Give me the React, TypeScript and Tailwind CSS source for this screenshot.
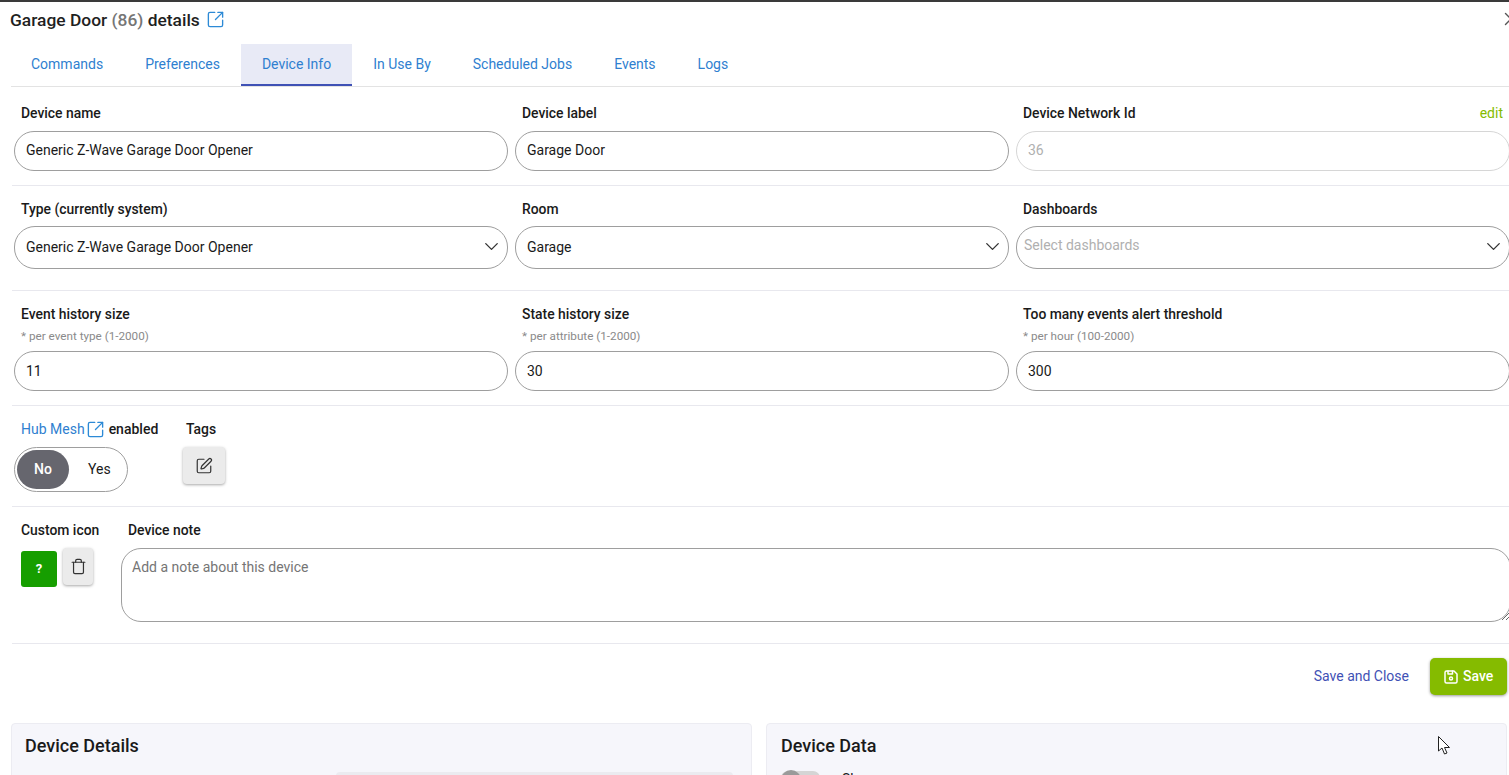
import React from 'react';
import { ChevronDown, SquareArrowOutUpRight, SquarePen, Trash, X } from 'lucide-react';
import { TbDeviceFloppy } from 'react-icons/tb';

const tabs = ['Commands', 'Preferences', 'Device Info', 'In Use By', 'Scheduled Jobs', 'Events', 'Logs'];

const Label = ({ children }: { children: React.ReactNode }) => (
  <div className="text-[13.9px] font-medium leading-5 text-[#1a1a1a]">{children}</div>
);

const SelectBox = ({ value, placeholder }: { value?: string; placeholder?: string }) => (
  <div className="flex h-[43px] items-center justify-between rounded-[21px] border border-[#9e9e9e] bg-white pr-[4px]">
    {value ? (
      <span className="pl-[11px] text-[14px] text-[#1a1a1a]">{value}</span>
    ) : (
      <span className="pb-[4px] pl-[7px] text-[14px] text-[#b0b0b0]">{placeholder}</span>
    )}
    <ChevronDown size={23} strokeWidth={1.4} className="mb-[2px] text-[#333]" />
  </div>
);

const Divider = () => <div className="ml-[1px] h-px bg-[#e8e8ee]" />;

export default function App() {
  return (
    <div className="h-[775px] w-[1509px] overflow-hidden bg-white font-['Roboto',sans-serif]">
      <div className="h-[2px] bg-[#3a3a3a]" />
      <div className="relative flex h-[42px] items-start pl-[10px] pt-[7px]">
        <span className="text-[17.4px] font-medium leading-[22px] text-[#1f1f1f]">
          Garage Door <span className="text-[#757575]">(86)</span> details
        </span>
        <SquareArrowOutUpRight size={19} strokeWidth={1.7} className="ml-[6px] mt-[1px] text-[#2d8ad6]" />
        <X size={22} strokeWidth={1.5} className="absolute right-[-13px] top-[6px] text-[#555]" />
      </div>

      <div className="ml-[11px] flex h-[43px] border-b border-[#e3e3e3]">
        {tabs.map((tab, i) => (
          <div
            key={tab}
            className={`flex items-center border-b-2 pr-[21px] pt-[1px] text-[14px] text-[#2f7fd0] ${
              i === 0 ? 'pl-[20px]' : 'pl-[21px]'
            } ${tab === 'Device Info' ? 'border-[#3f51b5] bg-[#e8eaf6]' : 'border-transparent'}`}
          >
            {tab}
          </div>
        ))}
      </div>

      <div className="ml-[11px] w-[1520px]">
        <div className="grid h-[98px] w-[1499px] grid-cols-3 gap-x-[7px] pl-[3px] pt-[16px]">
          <div>
            <div className="pl-[7px]"><Label>Device name</Label></div>
            <div className="mt-[8px] flex h-10 items-center rounded-[20px] border border-[#9e9e9e] px-[11px] pb-[2px] text-[14px] text-[#1a1a1a]">Generic Z-Wave Garage Door Opener</div>
          </div>
          <div>
            <div className="pl-[7px]"><Label>Device label</Label></div>
            <div className="mt-[8px] flex h-10 items-center rounded-[20px] border border-[#9e9e9e] px-[11px] pb-[2px] text-[14px] text-[#1a1a1a]">Garage Door</div>
          </div>
          <div>
            <div className="flex justify-between pl-[7px] pr-[7px]">
              <Label>Device Network Id</Label>
              <span className="text-[14px] leading-5 text-[#85bb00]">edit</span>
            </div>
            <div className="mt-[8px] flex h-10 items-center rounded-[20px] border border-[#d6d6d6] px-[11px] pb-[2px] text-[14px] text-[#b0b0b0]">36</div>
          </div>
        </div>
        <Divider />

        <div className="grid h-[104px] w-[1499px] grid-cols-3 gap-x-[7px] pl-[3px] pt-[13px]">
          <div>
            <div className="pl-[7px]"><Label>Type (currently system)</Label></div>
            <div className="mt-[7px]"><SelectBox value="Generic Z-Wave Garage Door Opener" /></div>
          </div>
          <div>
            <div className="pl-[7px]"><Label>Room</Label></div>
            <div className="mt-[7px]"><SelectBox value="Garage" /></div>
          </div>
          <div>
            <div className="pl-[7px]"><Label>Dashboards</Label></div>
            <div className="mt-[7px]"><SelectBox placeholder="Select dashboards" /></div>
          </div>
        </div>
        <Divider />

        <div className="grid h-[114px] w-[1499px] grid-cols-3 gap-x-[7px] pl-[3px] pt-[13px]">
          {[
            ['Event history size', '* per event type (1-2000)', '11'],
            ['State history size', '* per attribute (1-2000)', '30'],
            ['Too many events alert threshold', '* per hour (100-2000)', '300'],
          ].map(([label, hint, value]) => (
            <div key={label}>
              <div className="pl-[7px]"><Label>{label}</Label></div>
              <div className="mt-[4px] pl-[7px] text-[11.7px] leading-[16px] text-[#8a8a8a]">{hint}</div>
              <div className="mt-[7px] flex h-10 items-center rounded-[20px] border border-[#9e9e9e] px-[11px] text-[14px] text-[#1a1a1a]">{value}</div>
            </div>
          ))}
        </div>
        <Divider />

        <div className="flex h-[100px] pl-[3px] pt-[13px]">
          <div className="w-[169px]">
            <div className="flex items-center pl-[7px] text-[14px] leading-5">
              <span className="text-[#2f7fd0]">Hub Mesh</span>
              <SquareArrowOutUpRight size={19} strokeWidth={1.7} className="ml-[1px] text-[#2d8ad6]" />
              <span className="ml-[4px] font-medium text-[#1a1a1a]">enabled</span>
            </div>
            <div className="mt-[8px] flex h-[45px] w-[114px] items-center rounded-[23px] border border-[#9e9e9e] pl-[2px]">
              <div className="flex h-[39px] w-[52px] items-center justify-center rounded-[20px] bg-[#66666e] text-[14px] font-medium text-white">No</div>
              <div className="ml-[19px] text-[14px] text-[#1a1a1a]">Yes</div>
            </div>
          </div>
          <div>
            <div className="pl-[3px]"><Label>Tags</Label></div>
            <div className="mt-[8px] flex h-[37px] w-[42px] items-center justify-center rounded-[4px] bg-[#ebebeb] shadow-[0_1px_3px_rgba(0,0,0,0.35)]">
              <SquarePen size={18} strokeWidth={1.6} className="text-[#333]" />
            </div>
          </div>
        </div>
        <Divider />

        <div className="flex h-[136px] pl-[3px] pt-[13px]">
          <div className="w-[107px]">
            <div className="pl-[7px]"><Label>Custom icon</Label></div>
            <div className="mt-[8px] flex items-start pl-[7px]">
              <div className="mt-[3px] flex h-9 w-9 items-center justify-center rounded-[3px] bg-[#169e00] text-[13px] font-bold text-white">?</div>
              <div className="ml-[6px] flex h-[37px] w-[30px] items-center justify-center rounded-[4px] bg-[#ebebeb] shadow-[0_1px_3px_rgba(0,0,0,0.35)]">
                <Trash size={17} strokeWidth={1.7} className="text-[#333]" />
              </div>
            </div>
          </div>
          <div className="w-[1390px]">
            <div className="pl-[7px]"><Label>Device note</Label></div>
            <textarea
              readOnly
              placeholder="Add a note about this device"
              className="mt-[8px] block h-[74px] w-full resize-y rounded-[20px] border border-[#9e9e9e] px-[10px] py-[8px] text-[14px] leading-5 outline-none placeholder:text-[#757575]"
            />
          </div>
        </div>
        <Divider />
      </div>

      <div className="flex h-[79px] items-start justify-end pr-[2px] pt-[14px]">
        <span className="mr-[21px] mt-[8px] text-[14px] leading-5 text-[#3f51b5]">Save and Close</span>
        <div className="flex h-[37px] w-[77px] items-center gap-[3px] rounded-[5px] bg-[#85bb00] pl-[12px] text-[14px] font-medium text-white shadow-[0_1px_3px_rgba(0,0,0,0.4)]">
          <TbDeviceFloppy size={18} />
          Save
        </div>
      </div>

      <div className="flex gap-[14px] pl-[11px] pr-[2px]">
        <div className="h-[80px] w-[741px] rounded-[4px] border border-[#ececf2] bg-[#f6f6fb] pl-[13px] pr-[18px] pt-[10px]">
          <div className="text-[18px] font-medium leading-6 text-[#1a1a1a]">Device Details</div>
          <div className="ml-[311px] mt-[14px] h-10 rounded-[4px] bg-[#ebebf0]" />
        </div>
        <div className="h-[80px] w-[741px] rounded-[4px] border border-[#ececf2] bg-[#f6f6fb] pl-[14px] pt-[10px]">
          <div className="text-[18px] font-medium leading-6 text-[#1a1a1a]">Device Data</div>
          <div className="mt-[13px] flex items-start">
            <div className="relative h-[14px] w-[39px] rounded-[7px] bg-[#d5d5d5]">
              <div className="absolute left-0 top-[-1px] h-5 w-5 rounded-full bg-[#9a9a9a]" />
            </div>
            <span className="ml-[22px] text-[14px] leading-4 text-[#1a1a1a]">Show</span>
          </div>
        </div>
      </div>

      {/* mouse pointer caught in the screenshot */}
      <svg className="absolute left-[1437px] top-[735px]" width="16" height="22" viewBox="0 0 16 22">
        <path d="M1.5 1.5 L1.5 16 L5 13 L7.5 19 L10 18 L7.5 12.5 L12.5 12.5 Z" fill="#fff" stroke="#222" strokeWidth="1" />
      </svg>
    </div>
  );
}
